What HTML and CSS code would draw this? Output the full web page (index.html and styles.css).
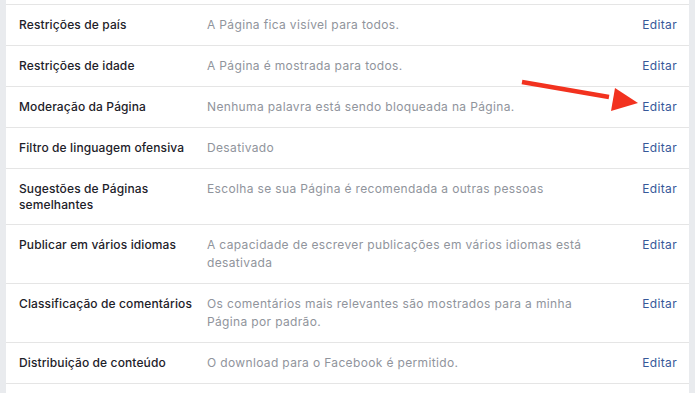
FILE: index.html
```html
<!DOCTYPE html>
<html lang="pt">
<head>
<meta charset="utf-8">
<link rel="stylesheet" href="styles.css">
</head>
<body>
<div class="panel">
  <div class="top"></div>
  <div class="row"><div class="label">Restrições de país</div><div class="desc">A Página fica visível para todos.</div><a class="edit">Editar</a></div>
  <div class="row"><div class="label">Restrições de idade</div><div class="desc">A Página é mostrada para todos.</div><a class="edit">Editar</a></div>
  <div class="row"><div class="label">Moderação da Página</div><div class="desc">Nenhuma palavra está sendo bloqueada na Página.</div><a class="edit">Editar</a></div>
  <div class="row"><div class="label">Filtro de linguagem ofensiva</div><div class="desc">Desativado</div><a class="edit">Editar</a></div>
  <div class="row"><div class="label">Sugestões de Páginas semelhantes</div><div class="desc">Escolha se sua Página é recomendada a outras pessoas</div><a class="edit">Editar</a></div>
  <div class="row"><div class="label">Publicar em vários idiomas</div><div class="desc">A capacidade de escrever publicações em vários idiomas está desativada</div><a class="edit">Editar</a></div>
  <div class="row"><div class="label">Classificação de comentários</div><div class="desc">Os comentários mais relevantes são mostrados para a minha Página por padrão.</div><a class="edit">Editar</a></div>
  <div class="row"><div class="label">Distribuição de conteúdo</div><div class="desc">O download para o Facebook é permitido.</div><a class="edit">Editar</a></div>
  <svg class="arrow" width="130" height="40" viewBox="0 0 130 40">
    <line x1="12" y1="7" x2="99" y2="22" stroke="#f2321f" stroke-width="4.5"/>
    <polygon points="105,13 101,36 128,28" fill="#f2321f"/>
  </svg>
</div>
</body>
</html>
```
FILE: styles.css
```css
html, body {
  margin: 0;
  padding: 0;
}
body {
  background: #e9ebee;
  font-family: Inter, "Liberation Sans", Arial, sans-serif;
  font-size: 12px;
  width: 695px;
  height: 393px;
  overflow: hidden;
}
.panel {
  position: relative;
  margin-left: 6px;
  width: 683px;
  background: #fff;
  height: 393px;
}
.top {
  height: 4px;
  border-bottom: 1px solid #e5e5e5;
}
.row {
  display: grid;
  grid-template-columns: 188px 405px 1fr;
  align-items: start;
  padding: 11px 12px 11px 13px;
  border-bottom: 1px solid #e5e5e5;
}
.label {
  color: #1d2129;
  font-weight: 500;
  line-height: 16px;
  letter-spacing: 0.12px;
  padding-top: 1px;
  padding-right: 4px;
}
.desc {
  color: #90949c;
  line-height: 18px;
  letter-spacing: 0.35px;
}
.edit {
  color: #365899;
  line-height: 18px;
  letter-spacing: 0.35px;
  text-align: right;
}
.arrow {
  position: absolute;
  left: 504px;
  top: 75px;
}
```
